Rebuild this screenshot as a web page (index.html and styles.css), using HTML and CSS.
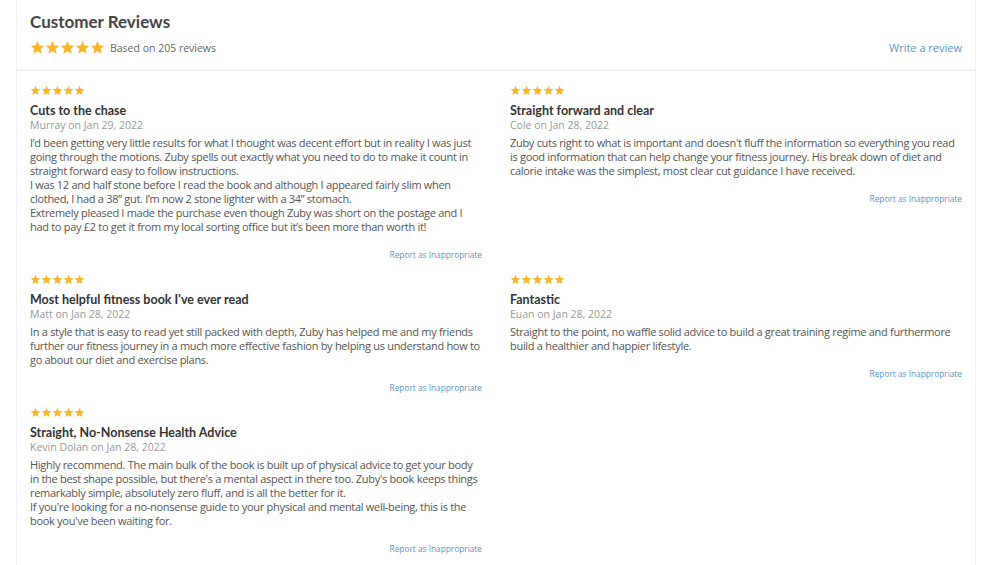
FILE: index.html
```html
<!DOCTYPE html>
<html lang="en">
<head>
<meta charset="utf-8">
<title>Customer Reviews</title>
<link rel="stylesheet" href="styles.css">
</head>
<body>
<svg width="0" height="0" class="defs">
  <defs>
    <symbol id="star" viewBox="0 0 24 24"><path d="M12 1.5l3.1 7.1 7.7.7-5.8 5.1 1.7 7.6L12 18l-6.7 4 1.7-7.6L1.2 9.3l7.7-.7z"/></symbol>
  </defs>
</svg>
<div class="panel">
  <header class="head">
    <h1 class="title">Customer Reviews</h1>
    <div class="summary">
      <div class="summary-left">
        <span class="stars big">
          <svg><use href="#star"/></svg><svg><use href="#star"/></svg><svg><use href="#star"/></svg><svg><use href="#star"/></svg><svg><use href="#star"/></svg>
        </span>
        <span class="based">Based on 205 reviews</span>
      </div>
      <a class="write" href="#">Write a review</a>
    </div>
  </header>
  <div class="grid">
    <article class="review">
      <span class="stars"><svg><use href="#star"/></svg><svg><use href="#star"/></svg><svg><use href="#star"/></svg><svg><use href="#star"/></svg><svg><use href="#star"/></svg></span>
      <h3 class="r-title">Cuts to the chase</h3>
      <div class="author">Murray on Jan 29, 2022</div>
      <p class="body">I’d been getting very little results for what I thought was decent effort but in reality I was just going through the motions. Zuby spells out exactly what you need to do to make it count in straight forward easy to follow instructions.<br>I was 12 and half stone before I read the book and although I appeared fairly slim when clothed, I had a 38” gut. I’m now 2 stone lighter with a 34” stomach.<br>Extremely pleased I made the purchase even though Zuby was short on the postage and I had to pay £2 to get it from my local sorting office but it’s been more than worth it!</p>
      <a class="report" href="#">Report as Inappropriate</a>
    </article>
    <article class="review">
      <span class="stars"><svg><use href="#star"/></svg><svg><use href="#star"/></svg><svg><use href="#star"/></svg><svg><use href="#star"/></svg><svg><use href="#star"/></svg></span>
      <h3 class="r-title">Straight forward and clear</h3>
      <div class="author">Cole on Jan 28, 2022</div>
      <p class="body">Zuby cuts right to what is important and doesn't fluff the information so everything you read is good information that can help change your fitness journey. His break down of diet and calorie intake was the simplest, most clear cut guidance I have received.</p>
      <a class="report" href="#">Report as Inappropriate</a>
    </article>
    <article class="review">
      <span class="stars"><svg><use href="#star"/></svg><svg><use href="#star"/></svg><svg><use href="#star"/></svg><svg><use href="#star"/></svg><svg><use href="#star"/></svg></span>
      <h3 class="r-title">Most helpful fitness book I've ever read</h3>
      <div class="author">Matt on Jan 28, 2022</div>
      <p class="body">In a style that is easy to read yet still packed with depth, Zuby has helped me and my friends further our fitness journey in a much more effective fashion by helping us understand how to go about our diet and exercise plans.</p>
      <a class="report" href="#">Report as Inappropriate</a>
    </article>
    <article class="review">
      <span class="stars"><svg><use href="#star"/></svg><svg><use href="#star"/></svg><svg><use href="#star"/></svg><svg><use href="#star"/></svg><svg><use href="#star"/></svg></span>
      <h3 class="r-title">Fantastic</h3>
      <div class="author">Euan on Jan 28, 2022</div>
      <p class="body">Straight to the point, no waffle solid advice to build a great training regime and furthermore build a healthier and happier lifestyle.</p>
      <a class="report" href="#">Report as Inappropriate</a>
    </article>
    <article class="review">
      <span class="stars"><svg><use href="#star"/></svg><svg><use href="#star"/></svg><svg><use href="#star"/></svg><svg><use href="#star"/></svg><svg><use href="#star"/></svg></span>
      <h3 class="r-title">Straight, No-Nonsense Health Advice</h3>
      <div class="author">Kevin Dolan on Jan 28, 2022</div>
      <p class="body">Highly recommend. The main bulk of the book is built up of physical advice to get your body in the best shape possible, but there's a mental aspect in there too. Zuby's book keeps things remarkably simple, absolutely zero fluff, and is all the better for it.<br>If you're looking for a no-nonsense guide to your physical and mental well-being, this is the book you've been waiting for.</p>
      <a class="report" href="#">Report as Inappropriate</a>
    </article>
  </div>
</div>
</body>
</html>
```
FILE: styles.css
```css
* { box-sizing: border-box; }
html, body { margin: 0; padding: 0; background: #fff; }
body {
  font-family: "Open Sans", "Noto Sans", sans-serif;
  color: #555;
  overflow: hidden;
}
.defs { position: absolute; width: 0; height: 0; }
.panel {
  margin: 0 29px 0 16px;
  border-left: 1px solid #f2f2f2;
  border-right: 1px solid #f2f2f2;
  min-height: 565px;
}
.head {
  padding: 11px 13px 14px 13px;
  border-bottom: 2px solid #f1f1f1;
}
.title {
  margin: 0;
  font-family: "Lato", sans-serif;
  font-weight: bold;
  font-size: 17px;
  color: #444;
  line-height: 22px;
}
.summary {
  display: flex;
  justify-content: space-between;
  align-items: center;
  margin-top: 7px;
}
.summary-left { display: flex; align-items: center; }
.stars { display: flex; fill: #f7b52c; }
.stars svg { width: 11px; height: 11px; margin-right: 0; }
.stars.big svg { width: 15px; height: 15px; margin-right: 0; }
.based { font-size: 10.5px; margin-left: 5px; color: #666; }
.write {
  font-size: 11px;
  color: #5b95c9;
  text-decoration: none;
}
.grid {
  display: grid;
  grid-template-columns: 1fr 1fr;
  column-gap: 28px;
  row-gap: 13px;
  padding: 14px 13px 0 13px;
  align-items: start;
}
.review { display: flex; flex-direction: column; }
.r-title {
  margin: 7px 0 0 0;
  font-family: "Lato", sans-serif;
  font-weight: bold;
  font-size: 12.5px;
  color: #333;
  line-height: 15px;
}
.author {
  font-size: 10.5px;
  color: #999;
  line-height: 15px;
}
.body {
  margin: 3px 0 0 0;
  font-size: 11px;
  letter-spacing: -0.3px;
  line-height: 14px;
  color: #555;
}
.report {
  align-self: flex-end;
  margin-top: 15px;
  font-size: 8.3px;
  color: #5b95c9;
  text-decoration: none;
  line-height: 12px;
}
```
